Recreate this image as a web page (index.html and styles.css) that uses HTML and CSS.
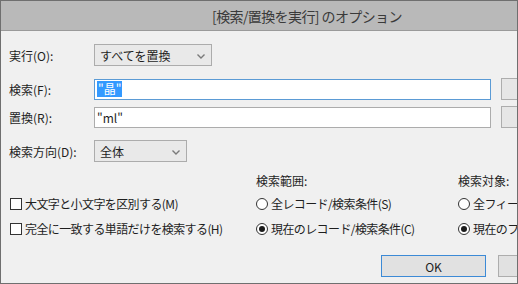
FILE: index.html
```html
<!DOCTYPE html>
<html lang="ja">
<head>
<meta charset="utf-8">
<link rel="stylesheet" href="styles.css">
</head>
<body>
<div class="window">
  <div class="titlebar"><span class="title">[検索/置換を実行] のオプション</span></div>
  <div class="content">
    <div class="row r1">
      <span class="label">実行(O):</span>
      <div class="select sel-wide"><span>すべてを置換</span><svg class="chev" width="8" height="5" viewBox="0 0 8 5"><path d="M0.5 0.5 L4 4 L7.5 0.5" fill="none" stroke="#7a7a7a" stroke-width="1.4"/></svg></div>
    </div>
    <div class="row r2">
      <span class="label">検索(F):</span>
      <div class="input focus"><span class="sel">"晶"</span></div>
      <div class="sidebtn"></div>
    </div>
    <div class="row r3">
      <span class="label">置換(R):</span>
      <div class="input"><span>"ml"</span></div>
      <div class="sidebtn"></div>
    </div>
    <div class="row r4">
      <span class="label">検索方向(D):</span>
      <div class="select sel-narrow"><span>全体</span><svg class="chev" width="8" height="5" viewBox="0 0 8 5"><path d="M0.5 0.5 L4 4 L7.5 0.5" fill="none" stroke="#7a7a7a" stroke-width="1.4"/></svg></div>
    </div>
    <div class="lower">
      <span class="empty"></span>
      <span class="glabel">検索範囲:</span>
      <span class="glabel">検索対象:</span>
      <label class="opt"><span class="cb"></span>大文字と小文字を区別する(M)</label>
      <label class="opt"><span class="rb"></span>全レコード/検索条件(S)</label>
      <label class="opt"><span class="rb"></span>全フィールド</label>
      <label class="opt"><span class="cb"></span>完全に一致する単語だけを検索する(H)</label>
      <label class="opt"><span class="rb on"></span>現在のレコード/検索条件(C)</label>
      <label class="opt"><span class="rb on"></span>現在のフィールド</label>
    </div>
    <div class="footer">
      <div class="btn default">OK</div>
      <div class="btn">キャンセル</div>
    </div>
  </div>
</div>
</body>
</html>
```
FILE: styles.css
```css
* { box-sizing: border-box; }
html, body { margin: 0; padding: 0; }
body {
  font-family: "Noto Sans CJK JP", "Noto Sans", sans-serif;
  font-size: 12px;
  color: #1e1e1e;
  background: #f0f0f0;
}
.window {
  width: 518px;
  height: 284px;
  border: 1px solid #6f6f6f;
  background: #f0f0f0;
  overflow: hidden;
  display: flex;
  flex-direction: column;
}
.titlebar {
  height: 30px;
  flex: none;
  background: #b9b9b9;
  border-bottom: 1px solid #9a9a9a;
  display: flex;
  align-items: center;
  padding-left: 211px;
}
.title {
  font-size: 14px;
  color: #3a3a3a;
  white-space: nowrap;
  letter-spacing: -0.6px;
}
.content {
  padding: 13px 0 0 8px;
  display: flex;
  flex-direction: column;
  width: 640px;
}
.row {
  display: flex;
  align-items: center;
}
.r1 { height: 22px; }
.r2 { height: 22px; margin-top: 12px; }
.r3 { height: 22px; margin-top: 6px; }
.r4 { height: 22px; margin-top: 12px; }
.label {
  width: 85px;
  flex: none;
  padding-top: 1px;
  white-space: nowrap;
}
.select {
  height: 22px;
  border: 1px solid #acacac;
  background: #e9e9e9;
  display: flex;
  align-items: center;
  justify-content: space-between;
  padding: 1px 6px 0 5px;
}
.sel-wide { width: 118px; }
.sel-narrow { width: 93px; }
.chev { margin-top: 1px; }
.input {
  width: 397px;
  height: 21px;
  border: 1px solid #acacac;
  background: #fff;
  display: flex;
  align-items: center;
  padding: 0 2px;
}
.input.focus { border-color: #5b9bd5; }
.sel {
  background: #3399ff;
  color: #fff;
  padding: 0 1px;
  line-height: 16px;
}
.sidebtn {
  margin-left: 10px;
  width: 80px;
  height: 22px;
  border: 1px solid #adadad;
  background: #e6e6e6;
  flex: none;
}
.lower {
  margin-top: 11px;
  margin-left: 1px;
  display: grid;
  grid-template-columns: 246px 202px 120px;
  grid-template-rows: 18px 25px 25px;
  align-items: center;
}
.glabel { padding-bottom: 3px; }
.opt {
  display: flex;
  align-items: center;
  white-space: nowrap;
  letter-spacing: -0.6px;
}
.cb {
  width: 12px;
  height: 12px;
  border: 1px solid #333;
  background: #fff;
  margin-right: 3px;
  flex: none;
}
.rb {
  width: 12px;
  height: 12px;
  border: 1px solid #333;
  border-radius: 50%;
  background: #fff;
  margin-right: 3px;
  flex: none;
  display: flex;
  align-items: center;
  justify-content: center;
}
.rb.on::after {
  content: "";
  width: 6px;
  height: 6px;
  border-radius: 50%;
  background: #1a1a1a;
}
.footer {
  margin-top: 14px;
  display: flex;
  padding-left: 372px;
}
.btn {
  width: 105px;
  height: 22px;
  border: 1px solid #adadad;
  background: #e1e1e1;
  display: flex;
  align-items: center;
  justify-content: center;
  margin-right: 12px;
  flex: none;
}
.btn.default { border-color: #3c8ad6; }
```
